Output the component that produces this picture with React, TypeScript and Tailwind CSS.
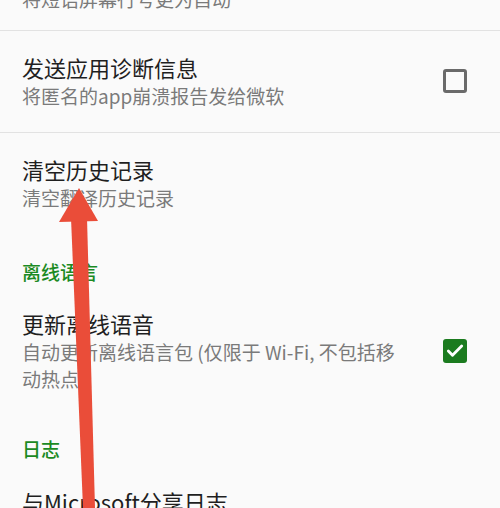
import { Check } from "lucide-react"

const font = { fontFamily: '"Noto Sans CJK SC", "Noto Sans", sans-serif' }

function Checkbox({ checked }: { checked?: boolean }) {
  if (checked) {
    return (
      <div className="flex h-[24px] w-[24px] shrink-0 items-center justify-center rounded-[3px] bg-[#1b7b1f]">
        <Check size={20} strokeWidth={3.4} className="text-white" />
      </div>
    )
  }
  return <div className="h-[24px] w-[24px] shrink-0 rounded-[3px] border-[3px] border-[#6a6a6a]" />
}

function SettingRow({
  title,
  subtitle,
  checkbox,
  checked,
  className,
}: {
  title: string
  subtitle?: React.ReactNode
  checkbox?: boolean
  checked?: boolean
  className?: string
}) {
  return (
    <div className={`flex items-center pl-[22px] pr-[33px] ${className ?? ""}`}>
      <div className="flex-1">
        <div className="text-[22px] leading-[29px] text-[#1f1f1f]">{title}</div>
        {subtitle && <div className="text-[19px] leading-[27px] text-[#7a7a7a]">{subtitle}</div>}
      </div>
      {checkbox && <Checkbox checked={checked} />}
    </div>
  )
}

export default function App() {
  return (
    <div className="relative h-[508px] w-[500px] overflow-hidden bg-[#fafafa]" style={font}>
      {/* cut-off row at the top */}
      <div className="-mt-[15px] border-b border-[#e2e2e2] pb-[18px] pl-[22px]">
        <div className="text-[19px] leading-[27px] text-[#7a7a7a]">将短语屏幕行号更为自动</div>
      </div>

      <SettingRow
        title="发送应用诊断信息"
        subtitle="将匿名的app崩溃报告发给微软"
        checkbox
        className="border-b border-[#e2e2e2] pb-[23px] pt-[22px]"
      />

      <SettingRow title="清空历史记录" subtitle="清空翻译历史记录" className="pt-[22px]" />

      {/* 离线语言 */}
      <div className="mt-[49px] pl-[22px] text-[19px] font-medium leading-[24px] text-[#1b8a23]">离线语言</div>

      <SettingRow
        title="更新离线语音"
        subtitle={
          <>
            自动更新离线语言包 (仅限于 Wi-Fi, 不包括移
            <br />
            动热点
          </>
        }
        checkbox
        checked
        className="pt-[25px]"
      />

      {/* 日志 */}
      <div className="mt-[45px] pl-[22px] text-[19px] font-medium leading-[24px] text-[#1b8a23]">日志</div>

      <SettingRow title="与Microsoft分享日志" className="pt-[26px]" />

      {/* red annotation arrow */}
      <svg className="absolute left-0 top-0" width="500" height="508" viewBox="0 0 500 508">
        <polygon points="71,218 87,218 95,508 83,508" fill="#ea4d39" />
        <polygon points="79,188 59,222 98,221" fill="#ea4d39" />
      </svg>
    </div>
  )
}
